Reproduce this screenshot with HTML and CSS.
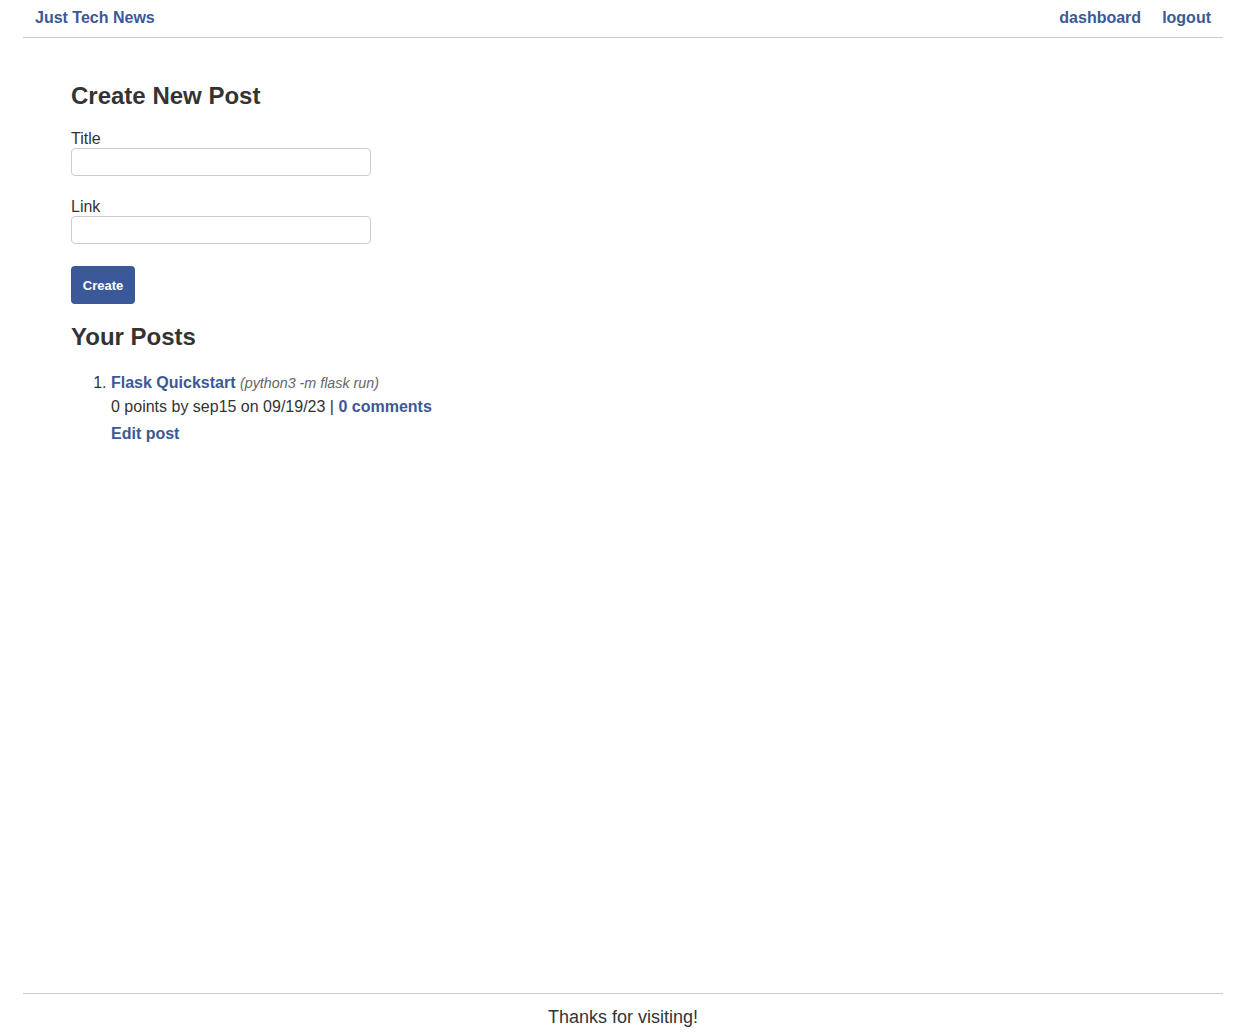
FILE: index.html
```html
<!DOCTYPE html>
<html lang="en">
<head>
<meta charset="utf-8">
<title>Just Tech News</title>
<link rel="stylesheet" href="styles.css">
</head>
<body>
<div class="page">
  <header class="site-header">
    <a class="brand" href="#">Just Tech News</a>
    <nav class="nav">
      <a href="#">dashboard</a>
      <a href="#">logout</a>
    </nav>
  </header>
  <main class="main">
    <section class="create">
      <h2>Create New Post</h2>
      <form class="form">
        <div class="field">
          <label for="title">Title</label>
          <input id="title" type="text">
        </div>
        <div class="field">
          <label for="link">Link</label>
          <input id="link" type="text">
        </div>
        <button type="button" class="btn">Create</button>
      </form>
    </section>
    <section class="posts">
      <h2>Your Posts</h2>
      <ol class="post-list">
        <li>
          <div class="post-title"><a href="#">Flask Quickstart</a> <span class="url">(python3 -m flask run)</span></div>
          <div class="meta">0 points by sep15 on 09/19/23 | <a href="#">0 comments</a></div>
          <div class="edit"><a href="#">Edit post</a></div>
        </li>
      </ol>
    </section>
  </main>
  <footer class="site-footer">Thanks for visiting!</footer>
</div>
</body>
</html>
```

FILE: styles.css
```css
* { box-sizing: border-box; }
html, body { margin: 0; padding: 0; }
body {
  font-family: "Liberation Sans", Arial, Helvetica, sans-serif;
  color: #333;
  font-size: 16px;
  background: #fff;
}
a { color: #3b5998; font-weight: bold; text-decoration: none; }
.page {
  width: 1200px;
  margin-left: 23px;
  min-height: 1034px;
  display: flex;
  flex-direction: column;
}
.site-header {
  display: flex;
  justify-content: space-between;
  align-items: center;
  height: 38px;
  padding: 0 12px 2px;
  border-bottom: 1px solid #ccc;
}
.nav { display: flex; gap: 21px; }
.main {
  flex: 1;
  padding: 0 48px;
}
h2 {
  font-size: 24px;
  font-weight: bold;
  margin: 0;
  line-height: 28px;
}
.create h2 { margin-top: 44px; margin-bottom: 20px; }
.field { display: flex; flex-direction: column; margin-bottom: 22px; }
.field label { line-height: 18px; margin-bottom: 0; }
.field input {
  width: 300px;
  height: 28px;
  border: 1px solid #ccc;
  border-radius: 4px;
  font: inherit;
  padding: 2px 6px;
}
.btn {
  margin-top: 0;
  background: #3b5998;
  color: #fff;
  border: none;
  border-radius: 4px;
  font-family: inherit;
  font-weight: bold;
  font-size: 13px;
  width: 64px;
  height: 38px;
  padding: 0;
}
.posts h2 { margin-top: 19px; }
.post-list {
  margin: 22px 0 0;
  padding-left: 40px;
}
.post-list li { line-height: 20px; }
.post-title .url { font-style: italic; color: #666; font-size: 14.3px; }
.meta { margin-top: 4px; }
.edit { margin-top: 7px; }
.site-footer {
  border-top: 1px solid #ccc;
  text-align: center;
  font-size: 18px;
  height: 41px;
  padding-top: 13px;
  margin-top: auto;
}
```
